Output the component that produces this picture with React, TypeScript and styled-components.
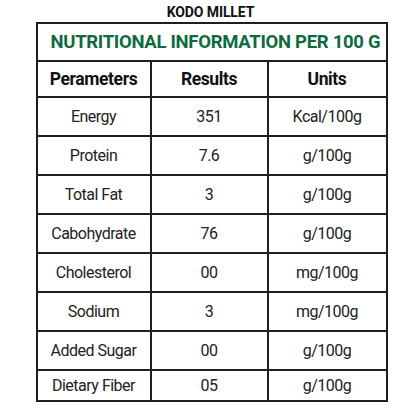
import { createGlobalStyle, styled } from 'styled-components';

const GlobalStyle = createGlobalStyle`
  html, body {
    margin: 0;
    padding: 0;
    background: #ffffff;
  }
  body {
    font-family: Roboto, 'Liberation Sans', sans-serif;
    color: #1c1c1c;
  }
`;

type Row = { name: string; result: string; unit: string; short?: boolean };

const rows: Row[] = [
  { name: 'Energy', result: '351', unit: 'Kcal/100g' },
  { name: 'Protein', result: '7.6', unit: 'g/100g' },
  { name: 'Total Fat', result: '3', unit: 'g/100g' },
  { name: 'Cabohydrate', result: '76', unit: 'g/100g' },
  { name: 'Cholesterol', result: '00', unit: 'mg/100g' },
  { name: 'Sodium', result: '3', unit: 'mg/100g' },
  { name: 'Added Sugar', result: '00', unit: 'g/100g' },
  { name: 'Dietary Fiber', result: '05', unit: 'g/100g', short: true },
];

function App() {
  return (
    <Page>
      <GlobalStyle />
      <Title>KODO MILLET</Title>
      <Table>
        <colgroup>
          <col style={{ width: 114 }} />
          <col style={{ width: 117 }} />
          <col style={{ width: 119 }} />
        </colgroup>
        <thead>
          <tr>
            <Banner colSpan={3}>NUTRITIONAL INFORMATION PER 100 G</Banner>
          </tr>
          <tr>
            <HeadCell>Perameters</HeadCell>
            <HeadCell>Results</HeadCell>
            <HeadCell>Units</HeadCell>
          </tr>
        </thead>
        <tbody>
          {rows.map(r => (
            <BodyRow key={r.name} $short={r.short}>
              <Cell>{r.name}</Cell>
              <Cell>{r.result}</Cell>
              <Cell>{r.unit}</Cell>
            </BodyRow>
          ))}
        </tbody>
      </Table>
    </Page>
  );
}

export default App;

const Page = styled.div`
  width: 420px;
  height: 420px;
  display: flex;
  flex-direction: column;
  align-items: center;
  padding-top: 3px;
  box-sizing: border-box;
`;

const Title = styled.div`
  font-family: Roboto, 'Liberation Sans', sans-serif;
  font-weight: 700;
  font-size: 14px;
  line-height: 18px;
  color: #111;
  height: 19px;
  margin-left: 1px;
  letter-spacing: -0.1px;
`;

const Table = styled.table`
  width: 351px;
  margin-left: 3px;
  border-collapse: collapse;
  table-layout: fixed;
  border: 2px solid #1f1f1f;

  th, td {
    border: 2px solid #1f1f1f;
    text-align: center;
    padding: 0;
  }
`;

const Banner = styled.th`
  height: 36px;
  font-size: 18.5px;
  font-weight: 700;
  color: #0f6a3e;
  letter-spacing: -0.3px;
  text-align: left !important;
  padding-left: 13px !important;
  white-space: nowrap;
`;

const HeadCell = styled.th`
  height: 34px;
  font-size: 17.5px;
  font-weight: 700;
  color: #111;
  letter-spacing: -0.4px;
`;

const BodyRow = styled.tr<{ $short?: boolean }>`
  height: ${p => (p.$short ? '31px' : '39px')};
`;

const Cell = styled.td`
  font-size: 16px;
  font-weight: 400;
  color: #222;
  letter-spacing: -0.5px;
`;
